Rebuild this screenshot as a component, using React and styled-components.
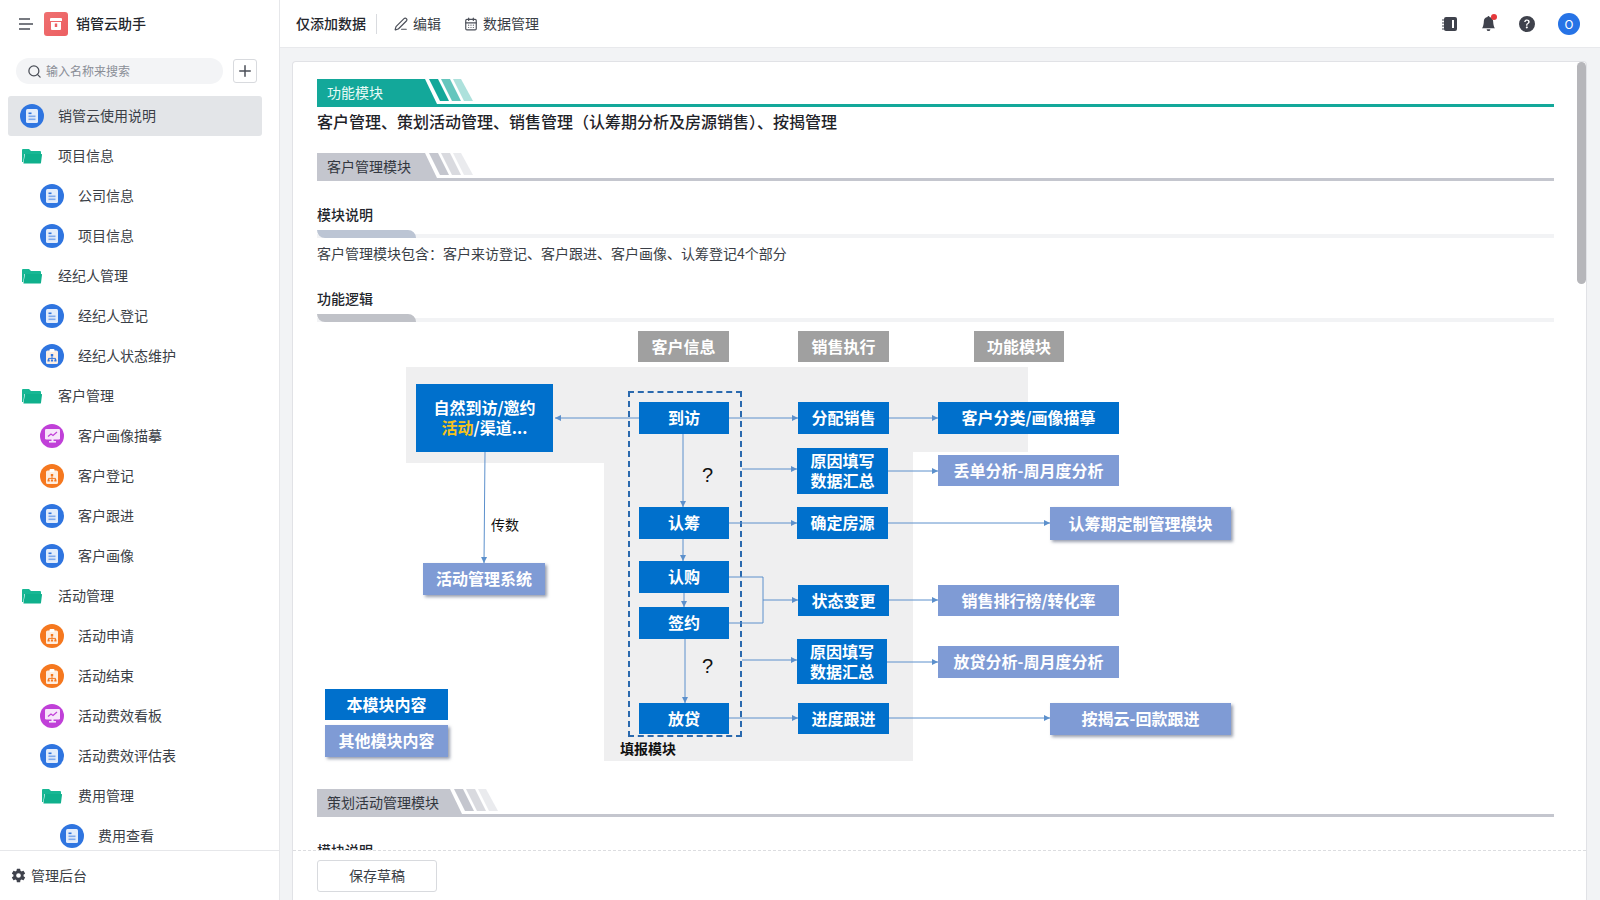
import React from 'react';
import styled, { createGlobalStyle } from 'styled-components';
import { Search, Plus, PenLine, CalendarDays } from 'lucide-react';
import { BsBellFill, BsQuestionCircleFill } from 'react-icons/bs';
import { IoSettingsSharp } from 'react-icons/io5';

const GlobalStyle = createGlobalStyle`
  html, body { margin: 0; padding: 0; height: 100%; overflow: hidden; }
  body {
    background: #f2f3f5;
    color: #2b2f36;
    font-family: "Noto Sans CJK SC", "Liberation Sans", sans-serif;
    font-size: 14px;
  }
`;

const Page = styled.div`
  display: flex;
  width: 1600px;
  height: 900px;
  overflow: hidden;
`;

/* ---------- sidebar ---------- */

const Sidebar = styled.aside`
  width: 280px;
  flex: none;
  display: flex;
  flex-direction: column;
  background: #fff;
  border-right: 1px solid #e6e7ea;
  box-sizing: border-box;
`;

const Brand = styled.div`
  height: 48px;
  display: flex;
  align-items: center;
  padding-left: 19px;
  font-weight: 500;
  color: #23262c;
`;

const Lifted = styled.span`
  margin-bottom: 2px;
`;

const Logo = styled.span`
  width: 24px;
  height: 24px;
  margin: 0 8px 0 11px;
  border-radius: 3px;
  background: linear-gradient(135deg, #ef7070, #ec5f62);
  display: flex;
  align-items: center;
  justify-content: center;
`;

const SearchRow = styled.div`
  display: flex;
  align-items: center;
  gap: 10px;
  height: 26px;
  padding: 10px 0 0 16px;
  margin-bottom: 12px;
`;

const SearchBox = styled.div`
  width: 207px;
  height: 26px;
  border-radius: 13px;
  background: #f3f4f6;
  display: flex;
  align-items: center;
  gap: 4px;
  padding-left: 11px;
  box-sizing: border-box;
  font-size: 12px;
  color: #8a8e96;
  svg { color: #4b4f58; }
`;

const AddButton = styled.button`
  width: 24px;
  height: 24px;
  padding: 0;
  border: 1px solid #d8dade;
  border-radius: 3px;
  background: #fff;
  color: #4b4f58;
  display: flex;
  align-items: center;
  justify-content: center;
`;

const TreeList = styled.div`
  flex: 1;
  min-height: 0;
  overflow: hidden;
`;

const TreeRow = styled.div`
  height: 40px;
  width: 254px;
  margin-left: 8px;
  box-sizing: border-box;
  display: flex;
  align-items: center;
  gap: 14px;
  padding-left: ${p => 12 + p.$depth * 20}px;
  border-radius: 3px;
  background: ${p => (p.$active ? '#e3e5e8' : 'transparent')};
  color: #3a3e46;
`;

const Round = styled.span`
  width: 24px;
  height: 24px;
  flex: none;
  border-radius: 50%;
  background: ${p => p.$bg};
  display: flex;
  align-items: center;
  justify-content: center;
`;

const SidebarFooter = styled.div`
  height: 50px;
  flex: none;
  box-sizing: border-box;
  border-top: 1px solid #e6e7ea;
  display: flex;
  align-items: center;
  gap: 5px;
  padding-left: 11px;
  color: #3a3e46;
  svg { color: #3f424c; }
`;

/* ---------- main ---------- */

const Main = styled.main`
  flex: 1;
  min-width: 0;
  display: flex;
  flex-direction: column;
`;

const TopBar = styled.header`
  height: 48px;
  flex: none;
  box-sizing: border-box;
  background: #fff;
  border-bottom: 1px solid #e8e9ec;
  display: flex;
  align-items: center;
  padding: 0 20px 0 16px;
`;

const BarTitle = styled.span`
  display: flex;
  align-items: center;
  height: 20px;
  font-weight: 500;
  color: #23262c;
  padding-right: 10px;
  border-right: 1px solid #d9dbdf;
  margin-right: 17px;
`;

const BarAction = styled.span`
  display: flex;
  align-items: center;
  gap: 5px;
  margin-right: 23px;
  color: #3a3e46;
  svg { color: #4b4f58; }
`;

const BarRight = styled.div`
  margin-left: auto;
  display: flex;
  align-items: center;
  gap: 23px;
  color: #3f424c;
`;

const BellWrap = styled.span`
  position: relative;
  display: flex;
`;

const RedDot = styled.i`
  position: absolute;
  top: -2px;
  right: -1px;
  width: 6px;
  height: 6px;
  border-radius: 50%;
  background: #e5383b;
`;

const Avatar = styled.span`
  width: 22px;
  height: 22px;
  border-radius: 50%;
  background: #2673e6;
  color: #fff;
  font-size: 12px;
  display: flex;
  align-items: center;
  justify-content: center;
`;

const Content = styled.div`
  flex: 1;
  min-height: 0;
  padding: 13px 13px 0 12px;
  display: flex;
`;

const Card = styled.section`
  position: relative;
  flex: 1;
  display: flex;
  flex-direction: column;
  background: #fff;
  border: 1px solid #e1e2e6;
  border-bottom: 0;
  border-radius: 4px 4px 0 0;
  overflow: hidden;
`;

const Thumb = styled.div`
  position: absolute;
  top: 0;
  right: 0;
  width: 9px;
  height: 222px;
  border-radius: 5px;
  background: #b6b6ba;
`;

const Scroller = styled.div`
  flex: 1;
  min-height: 0;
  overflow: hidden;
  padding: 17px 32px 0 24px;
`;

const CardFooter = styled.div`
  height: 50px;
  flex: none;
  border-top: 1px dashed #dcdde0;
  padding: 9px 0 0 24px;
  box-sizing: border-box;
`;

const DraftButton = styled.button`
  width: 120px;
  height: 32px;
  padding: 0 0 3px;
  background: #fff;
  border: 1px solid #d8dade;
  border-radius: 3px;
  font: inherit;
  color: #3a3e46;
`;

const Banner = styled.div`
  display: flex;
  height: 28px;
  box-sizing: border-box;
  border-bottom: 3px solid ${p => p.$line};
  margin-top: ${p => p.$top || 0}px;
`;

const BannerHead = styled.div`
  width: ${p => p.$w}px;
  height: 28px;
  flex: none;
  box-sizing: border-box;
  padding-left: 10px;
  line-height: 26px;
  background: ${p => p.$bg};
  color: ${p => p.$color};
  clip-path: polygon(
    0 0,
    ${p => p.$w - 12}px 0,
    ${p => p.$w}px 25px,
    ${p => p.$w}px 28px,
    0 28px
  );
`;

const StripeArt = styled.svg`
  flex: none;
  margin-left: -8px;
`;

const Title = styled.div`
  margin-top: 2px;
  font-size: 16px;
  line-height: 24px;
  font-weight: 500;
  color: #1f2329;
`;

const SubHead = styled.div`
  margin-top: ${p => p.$top}px;
  line-height: 22px;
  font-weight: 500;
  color: #23262c;
`;

const SubBar = styled.div`
  position: relative;
  margin-top: 5px;
  height: 8px;
  &::before {
    content: '';
    position: absolute;
    left: 0;
    right: 0;
    bottom: 0;
    height: 4px;
    background: #f2f3f5;
  }
  &::after {
    content: '';
    position: absolute;
    left: 0;
    bottom: 0;
    width: 99px;
    height: 8px;
    background: ${p => p.$color};
    border-radius: 0 8px 0 8px;
  }
`;

const BodyText = styled.p`
  margin: 4px 0 0;
  line-height: 22px;
  color: #3a3e46;
`;

/* diagram: a free canvas, everything is placed by page coordinates minus the origin */

const OX = 317;
const OY = 322;

const Canvas = styled.div`
  position: relative;
  height: 467px;
`;

const Lines = styled.svg`
  position: absolute;
  left: 0;
  top: 0;
  z-index: 2;
`;

const Shade = styled.div`
  position: absolute;
  left: ${p => p.$x - OX}px;
  top: ${p => p.$y - OY}px;
  width: ${p => p.$w}px;
  height: ${p => p.$h}px;
  background: #efeff0;
`;

const nodeColors = { blue: '#0070cc', lav: '#7f9bd5', gray: '#a0a0a0' };

const Node = styled.div`
  position: absolute;
  z-index: 3;
  box-sizing: border-box;
  padding-bottom: 2px;
  left: ${p => p.$x - OX}px;
  top: ${p => p.$y - OY}px;
  width: ${p => p.$w}px;
  height: ${p => p.$h}px;
  display: flex;
  align-items: center;
  justify-content: center;
  text-align: center;
  background: ${p => nodeColors[p.$kind]};
  color: #fff;
  font-size: 16px;
  font-weight: 700;
  line-height: 20px;
  box-shadow: ${p => (p.$shadow ? '2px 2px 3px rgba(70, 80, 110, 0.55)' : 'none')};
`;

const Gold = styled.span`
  color: #f5c21b;
`;

const DashBox = styled.div`
  position: absolute;
  z-index: 2;
  left: ${628 - OX}px;
  top: ${391 - OY}px;
  width: 114px;
  height: 346px;
  box-sizing: border-box;
  border: 2px dashed #2a69ae;
`;

const FreeText = styled.span`
  position: absolute;
  z-index: 3;
  left: ${p => p.$x - OX}px;
  top: ${p => p.$y - OY}px;
  line-height: 20px;
  font-size: 14px;
  font-weight: ${p => p.$weight || 400};
  color: #111;
`;

const Query = styled.span`
  position: absolute;
  z-index: 3;
  left: ${p => p.$x - OX}px;
  top: ${p => p.$y - OY}px;
  line-height: 22px;
  font-family: "Liberation Sans", sans-serif;
  font-size: 20px;
  color: #111;
`;

/* ---------- drawings ---------- */

const DocGlyph = () => (
  <svg width="12" height="14" viewBox="0 0 12 14">
    <rect width="12" height="14" rx="1.5" fill="#e4edfb" />
    <rect x="2.5" y="3.5" width="3" height="1.6" fill="#2f75e0" />
    <rect x="2.5" y="6.5" width="7" height="1.6" fill="#7fa9ec" />
    <rect x="2.5" y="9.5" width="7" height="1.6" fill="#7fa9ec" />
  </svg>
);

const OrgGlyph = ({ color }) => (
  <svg width="12" height="15" viewBox="0 0 12 15">
    <rect y="1.5" width="12" height="13.5" rx="1.5" fill="#fdeee2" />
    <rect x="3.5" width="5" height="3" rx="1" fill="#fff" />
    <rect x="4.8" y="5" width="2.4" height="2.4" fill={color} />
    <path d="M2.5 11v-1.6h7V11M6 7.4v2" stroke={color} fill="none" />
    <rect x="1.5" y="10.5" width="2.2" height="2" fill={color} />
    <rect x="4.9" y="10.5" width="2.2" height="2" fill={color} />
    <rect x="8.3" y="10.5" width="2.2" height="2" fill={color} />
  </svg>
);

const ChartGlyph = () => (
  <svg width="15" height="14" viewBox="0 0 15 14">
    <rect width="15" height="10.5" rx="1.2" fill="#f7e6fb" />
    <rect x="4" y="12" width="7" height="1.6" fill="#f7e6fb" />
    <rect x="6.5" y="10" width="2" height="2.5" fill="#f7e6fb" />
    <path d="M3 7.5 6 5l2 1.5L12 3" stroke="#c040d8" strokeWidth="1.2" fill="none" />
  </svg>
);

const FolderGlyph = () => (
  <svg width="20" height="16" viewBox="0 0 20 16">
    <path d="M0 2a1 1 0 0 1 1-1h6l2 2h9a1 1 0 0 1 1 1v2H2.4L1.2 14H0z" fill="#17b794" />
    <path d="M3 6h16.4a.6.6 0 0 1 .6.7l-1 8a1 1 0 0 1-1 .9H1.4z" fill="#0fb08c" />
  </svg>
);

const TreeIcon = ({ type }) => {
  if (type === 'folder') return <Round $bg="transparent"><FolderGlyph /></Round>;
  if (type === 'chart') return <Round $bg="#c040d8"><ChartGlyph /></Round>;
  if (type === 'org') return <Round $bg="#f5781f"><OrgGlyph color="#f5781f" /></Round>;
  if (type === 'orgBlue') return <Round $bg="#2f75e0"><OrgGlyph color="#2f75e0" /></Round>;
  return <Round $bg="#2f75e0"><DocGlyph /></Round>;
};

const Menu = () => (
  <svg width="14" height="12" viewBox="0 0 14 12">
    <path d="M0 1h11M0 6h14M0 11h11" stroke="#4b4f58" strokeWidth="1.6" fill="none" />
  </svg>
);

const LogoGlyph = () => (
  <svg width="12" height="12" viewBox="0 0 12 12">
    <path d="M1 0h10a1 1 0 0 1 1 1v2H0V1a1 1 0 0 1 1-1z" fill="#fff" />
    <path d="M1 4h10v7a1 1 0 0 1-1 1H2a1 1 0 0 1-1-1z" fill="#fff" />
    <rect x="4.8" y="5.5" width="2.4" height="3.5" fill="#ec5f62" />
  </svg>
);

const Notebook = () => (
  <svg width="16" height="16" viewBox="0 0 16 16">
    <rect x="2" y="1" width="13" height="14" rx="2" fill="#3f424c" />
    <rect x="10" y="4" width="2" height="8" fill="#fff" />
    <path d="M0 4h3M0 7h3M0 10h3M0 13h3" stroke="#3f424c" strokeWidth="1.2" />
  </svg>
);

const Stripes = ({ color }) => (
  <StripeArt width="44" height="22" viewBox="0 0 44 22">
    <polygon points="0,0 9,0 20,22 11,22" fill={color} />
    <polygon points="12,0 21,0 32,22 23,22" fill={color} opacity="0.65" />
    <polygon points="24,0 32,0 44,22 35,22" fill={color} opacity="0.35" />
  </StripeArt>
);

const SectionBanner = ({ text, tone, top, width = 120 }) => {
  const teal = tone === 'teal';
  return (
    <Banner $line={teal ? '#13a89a' : '#c4c6ce'} $top={top}>
      <BannerHead $w={width} $bg={teal ? '#13a89a' : '#c4c6ce'} $color={teal ? '#e8fbf7' : '#33373f'}>{text}</BannerHead>
      <Stripes color={teal ? '#13a89a' : '#c4c6ce'} />
    </Banner>
  );
};

const tree = [
  ['销管云使用说明', 0, 'doc', true],
  ['项目信息', 0, 'folder'],
  ['公司信息', 1, 'doc'],
  ['项目信息', 1, 'doc'],
  ['经纪人管理', 0, 'folder'],
  ['经纪人登记', 1, 'doc'],
  ['经纪人状态维护', 1, 'orgBlue'],
  ['客户管理', 0, 'folder'],
  ['客户画像描摹', 1, 'chart'],
  ['客户登记', 1, 'org'],
  ['客户跟进', 1, 'doc'],
  ['客户画像', 1, 'doc'],
  ['活动管理', 0, 'folder'],
  ['活动申请', 1, 'org'],
  ['活动结束', 1, 'org'],
  ['活动费效看板', 1, 'chart'],
  ['活动费效评估表', 1, 'doc'],
  ['费用管理', 1, 'folder'],
  ['费用查看', 2, 'doc'],
];

const nodes = [
  ['客户信息', 'gray', 638, 331, 91, 31],
  ['销售执行', 'gray', 798, 331, 91, 31],
  ['功能模块', 'gray', 974, 331, 90, 31],
  ['到访', 'blue', 639, 402, 90, 32],
  ['认筹', 'blue', 639, 507, 90, 32],
  ['认购', 'blue', 639, 561, 90, 32],
  ['签约', 'blue', 639, 607, 90, 32],
  ['放贷', 'blue', 639, 703, 90, 31],
  ['分配销售', 'blue', 798, 402, 91, 32],
  ['确定房源', 'blue', 797, 507, 91, 32],
  ['状态变更', 'blue', 798, 585, 91, 31],
  ['进度跟进', 'blue', 798, 703, 91, 31],
  ['客户分类/画像描摹', 'blue', 938, 402, 181, 32],
  ['丢单分析-周月度分析', 'lav', 938, 455, 181, 31],
  ['销售排行榜/转化率', 'lav', 938, 585, 181, 31],
  ['放贷分析-周月度分析', 'lav', 938, 646, 181, 32],
  ['认筹期定制管理模块', 'lav', 1050, 507, 181, 33, true],
  ['按揭云-回款跟进', 'lav', 1050, 703, 181, 32, true],
  ['活动管理系统', 'lav', 423, 563, 122, 32, true],
  ['本模块内容', 'blue', 325, 689, 123, 31],
  ['其他模块内容', 'lav', 325, 725, 123, 32, true],
];

const arrows = [
  [639, 418, 555, 418],
  [729, 418, 798, 418],
  [889, 418, 938, 418],
  [485, 452, 484, 563],
  [683, 434, 683, 507],
  [683, 539, 683, 561],
  [684, 593, 684, 607],
  [685, 639, 685, 703],
  [742, 469, 797, 469],
  [888, 471, 938, 471],
  [729, 523, 797, 523],
  [888, 523, 1050, 523],
  [763, 600, 798, 600],
  [889, 600, 938, 600],
  [742, 660, 797, 660],
  [887, 662, 938, 662],
  [729, 718, 798, 718],
  [889, 718, 1050, 718],
];

const Arrow = ({ from }) => {
  const [x1, y1, x2, y2] = from;
  const angle = (Math.atan2(y2 - y1, x2 - x1) * 180) / Math.PI;
  return (
    <g>
      <line x1={x1} y1={y1} x2={x2} y2={y2} stroke="#5c90cc" strokeWidth="1" />
      <polygon points="0,0 -6,-3 -6,3" fill="#5c90cc" transform={`translate(${x2} ${y2}) rotate(${angle})`} />
    </g>
  );
};

const Diagram = () => (
  <Canvas>
    <Shade $x={406} $y={367} $w={622} $h={85} />
    <Shade $x={406} $y={452} $w={198} $h={11} />
    <Shade $x={604} $y={452} $w={309} $h={309} />
    <Node $kind="blue" $x={416} $y={384} $w={137} $h={68}>
      <div>自然到访/邀约<br /><Gold>活动</Gold>/渠道...</div>
    </Node>
    <Node $kind="blue" $x={797} $y={448} $w={91} $h={46}>原因填写<br />数据汇总</Node>
    <Node $kind="blue" $x={797} $y={639} $w={90} $h={45}>原因填写<br />数据汇总</Node>
    {nodes.map(([label, kind, x, y, w, h, shadow]) => (
      <Node key={label} $kind={kind} $x={x} $y={y} $w={w} $h={h} $shadow={shadow}>{label}</Node>
    ))}
    <DashBox />
    <Lines width="1237" height="467" viewBox={`${OX} ${OY} 1237 467`}>
      {arrows.map(a => <Arrow key={a.join()} from={a} />)}
      <path d="M729 577H763V623H729" stroke="#5c90cc" fill="none" />
    </Lines>
    <FreeText $x={491} $y={514}>传数</FreeText>
    <Query $x={702} $y={464}>?</Query>
    <Query $x={702} $y={655}>?</Query>
    <FreeText $x={620} $y={738} $weight={700}>填报模块</FreeText>
  </Canvas>
);

export default function App() {
  return (
    <Page>
      <GlobalStyle />
      <Sidebar>
        <Brand>
          <Menu />
          <Logo><LogoGlyph /></Logo>
          <Lifted>销管云助手</Lifted>
        </Brand>
        <SearchRow>
          <SearchBox><Search size={15} /><Lifted>输入名称来搜索</Lifted></SearchBox>
          <AddButton><Plus size={18} /></AddButton>
        </SearchRow>
        <TreeList>
          {tree.map(([label, depth, type, active], i) => (
            <TreeRow key={i} $depth={depth} $active={active}>
              <TreeIcon type={type} />
              <Lifted>{label}</Lifted>
            </TreeRow>
          ))}
        </TreeList>
        <SidebarFooter><IoSettingsSharp size={15} /><Lifted>管理后台</Lifted></SidebarFooter>
      </Sidebar>
      <Main>
        <TopBar>
          <BarTitle><Lifted>仅添加数据</Lifted></BarTitle>
          <BarAction><PenLine size={14} /><Lifted>编辑</Lifted></BarAction>
          <BarAction><CalendarDays size={14} /><Lifted>数据管理</Lifted></BarAction>
          <BarRight>
            <Notebook />
            <BellWrap><BsBellFill size={15} /><RedDot /></BellWrap>
            <BsQuestionCircleFill size={16} />
            <Avatar>O</Avatar>
          </BarRight>
        </TopBar>
        <Content>
          <Card>
            <Thumb />
            <Scroller>
              <SectionBanner text="功能模块" tone="teal" />
              <Title>客户管理、策划活动管理、销售管理（认筹期分析及房源销售）、按揭管理</Title>
              <SectionBanner text="客户管理模块" top={20} />
              <SubHead $top={22}>模块说明</SubHead>
              <SubBar $color="#bcc5d4" />
              <BodyText>客户管理模块包含：客户来访登记、客户跟进、客户画像、认筹登记4个部分</BodyText>
              <SubHead $top={23}>功能逻辑</SubHead>
              <SubBar $color="#c0c2c8" />
              <Diagram />
              <SectionBanner text="策划活动管理模块" width={145} />
              <SubHead $top={22}>模块说明</SubHead>
            </Scroller>
            <CardFooter><DraftButton>保存草稿</DraftButton></CardFooter>
          </Card>
        </Content>
      </Main>
    </Page>
  );
}
